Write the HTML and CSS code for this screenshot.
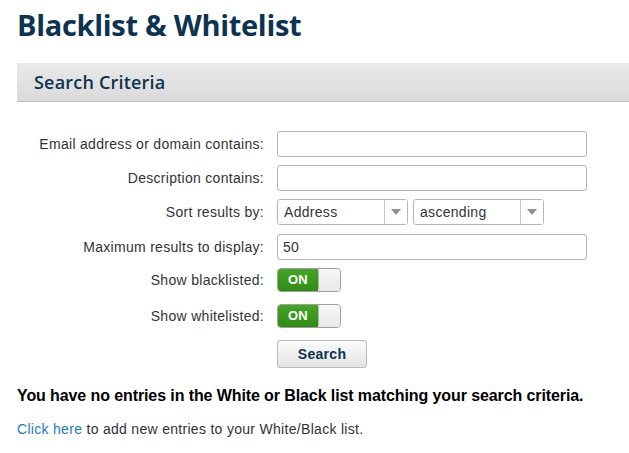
FILE: index.html
```html
<!DOCTYPE html>
<html lang="en">
<head>
  <meta charset="UTF-8" />
  <title>Blacklist &amp; Whitelist</title>
  <link rel="stylesheet" href="styles.css">
</head>
<body>
  <h1 class="page-title">Blacklist &amp; Whitelist</h1>

  <div class="section-bar">
    <h2>Search Criteria</h2>
  </div>

  <form class="search-form" onsubmit="return false;">
    <label for="email">Email address or domain contains:</label>
    <div class="field"><input type="text" id="email" class="text-input"></div>

    <label for="desc">Description contains:</label>
    <div class="field"><input type="text" id="desc" class="text-input"></div>

    <label for="sort">Sort results by:</label>
    <div class="field sort-field">
      <span class="select-wrap">
        <select id="sort">
          <option>Address</option>
          <option>Description</option>
        </select>
      </span>
      <span class="select-wrap">
        <select id="order">
          <option>ascending</option>
          <option>descending</option>
        </select>
      </span>
    </div>

    <label for="max">Maximum results to display:</label>
    <div class="field"><input type="text" id="max" class="text-input" value="50"></div>

    <label class="toggle-label">Show blacklisted:</label>
    <div class="field toggle-row">
      <span class="toggle"><span class="toggle-on">ON</span><span class="toggle-knob"></span></span>
    </div>

    <label class="toggle-label">Show whitelisted:</label>
    <div class="field toggle-row">
      <span class="toggle"><span class="toggle-on">ON</span><span class="toggle-knob"></span></span>
    </div>

    <span></span>
    <div class="field"><button type="submit" class="search-btn">Search</button></div>
  </form>

  <p class="no-results">You have no entries in the White or Black list matching your search criteria.</p>
  <p class="add-note"><a href="#">Click here</a> to add new entries to your White/Black list.</p>
</body>
</html>
```

FILE: styles.css
```css
body {
  margin: 0;
  padding: 0 0 0 17px;
  font-family: "Liberation Sans", Arial, sans-serif;
  font-size: 14px;
  letter-spacing: 0.3px;
  color: #333;
  background: #fff;
}
.page-title {
  font-family: "Open Sans", "DejaVu Sans", sans-serif;
  font-size: 29px;
  font-weight: bold;
  color: #0d3350;
  margin: 0;
  padding-top: 4px;
  line-height: 42px;
  letter-spacing: -0.3px;
}
.section-bar {
  margin-top: 17px;
  height: 38px;
  background: linear-gradient(#e9e9e9, #dadada);
  border-bottom: 1px solid #bdbdbd;
  padding-left: 17px;
}
.section-bar h2 {
  margin: 0;
  font-family: "Open Sans", "DejaVu Sans", sans-serif;
  font-size: 18px;
  font-weight: 600;
  letter-spacing: 0.2px;
  color: #0d3350;
  line-height: 38px;
}
.search-form {
  display: grid;
  grid-template-columns: 247px 1fr;
  grid-template-rows: 26px 26px 27px 26px 28px 28px 28px;
  column-gap: 13px;
  row-gap: 8px;
  margin-top: 29px;
}
.search-form label {
  text-align: right;
  line-height: 26px;
}
.search-form .toggle-label {
  line-height: 24px;
}
.text-input {
  box-sizing: border-box;
  width: 310px;
  height: 26px;
  border: 1px solid #b5b5b5;
  border-radius: 3px;
  padding: 0 5px;
  font-family: "Liberation Sans", Arial, sans-serif;
  font-size: 14px;
  letter-spacing: 0.3px;
  color: #333;
  outline: none;
}
.sort-field {
  display: flex;
  gap: 5px;
}
.select-wrap {
  position: relative;
  display: block;
  width: 131px;
  height: 26px;
}
.select-wrap select {
  appearance: none;
  -webkit-appearance: none;
  box-sizing: border-box;
  width: 100%;
  height: 26px;
  border: 1px solid #b5b5b5;
  border-radius: 3px;
  background: #fff;
  padding: 0 28px 0 6px;
  font-family: "Liberation Sans", Arial, sans-serif;
  font-size: 14px;
  letter-spacing: 0.3px;
  color: #333;
  outline: none;
}
.select-wrap::after {
  content: "";
  position: absolute;
  top: 1px;
  right: 1px;
  width: 22px;
  height: 24px;
  border-left: 1px solid #c8c8c8;
  background: #fff;
  pointer-events: none;
}
.select-wrap::before {
  content: "";
  position: absolute;
  z-index: 1;
  top: 10px;
  right: 7px;
  border-left: 5px solid transparent;
  border-right: 5px solid transparent;
  border-top: 6px solid #8f8f8f;
  pointer-events: none;
}
.toggle {
  display: flex;
  box-sizing: border-box;
  width: 64px;
  height: 24px;
  border: 1px solid #9e9e9e;
  border-radius: 4px;
  overflow: hidden;
}
.toggle-on {
  width: 40px;
  background: linear-gradient(#45a526, #2f8b15);
  color: #fff;
  font-weight: bold;
  font-size: 13px;
  line-height: 22px;
  text-align: center;
}
.toggle-knob {
  flex: 1;
  background: linear-gradient(#f7f7f7, #e8e8e8);
  border-left: 1px solid #b0b0b0;
  border-radius: 3px;
}
.search-btn {
  box-sizing: border-box;
  width: 90px;
  height: 28px;
  border: 1px solid #b8b8b8;
  border-radius: 3px;
  background: linear-gradient(#fbfbfb, #e4e4e4);
  font-family: "Liberation Sans", Arial, sans-serif;
  font-size: 14px;
  font-weight: bold;
  letter-spacing: 0.3px;
  color: #0d3350;
  cursor: pointer;
}
.no-results {
  margin: 19px 0 0;
  font-size: 16px;
  font-weight: bold;
  letter-spacing: -0.1px;
  color: #000;
}
.add-note {
  margin: 16px 0 0;
}
.add-note a {
  color: #1a7bc4;
  text-decoration: none;
}
```
